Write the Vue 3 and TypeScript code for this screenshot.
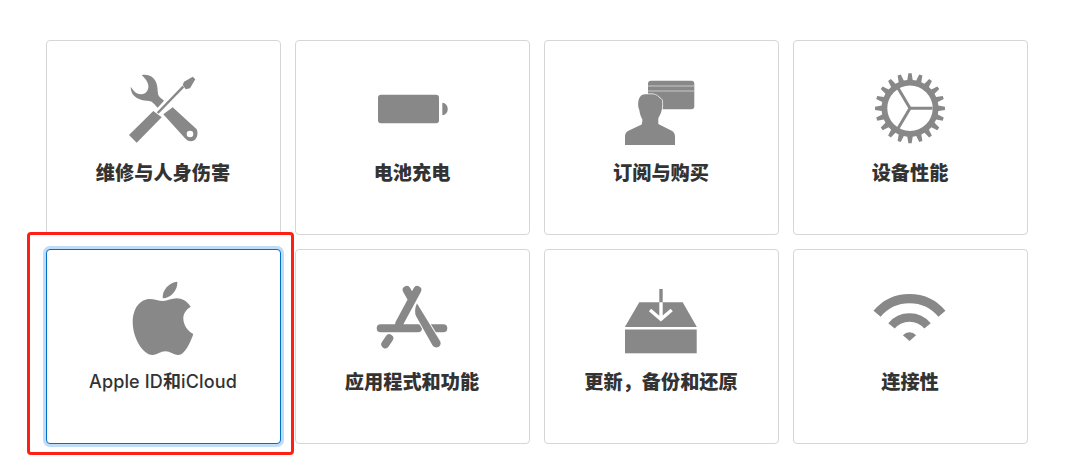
<template>
  <div class="topics">
    <div
      v-for="topic in topics"
      :key="topic.icon"
      class="topic-card"
      :class="{ focused: topic.icon === 'apple' }"
    >
      <svg class="topic-icon" width="81" height="80" viewBox="0 0 81 80">
        <template v-if="topic.icon === 'repair'">
          <path d="M18.7 5C22.5 4.3 26 5 28.7 6.7C32 9 33.7 12.5 34.3 16.7C34.7 20 34.7 22.5 35.3 25C36.5 27.5 38.8 28.8 41 30.7L34.7 37.7C32.5 35.5 31 33.5 28.7 31.7C25.5 30.5 22 30.8 18.7 30C15 29 12.3 27.3 10.3 25C8.5 22.5 7.7 19.8 7.7 16.7C9.3 19 11.2 21.7 13.7 23.3C16.5 24.5 19.5 24.5 22 23.3C24.5 21.5 25.8 18.3 25.3 15C24.6 11 21.5 7.7 18.7 5Z" />
          <path d="M49.7 37.3L40.3 44.3L62 68.3C64.5 71.5 68.5 72 71.3 70.3C74.5 68 75.3 63 73.7 59.3ZM67 60.7a3.3 3.3 0 1 1 0 6.6a3.3 3.3 0 1 1 0-6.6Z" fill-rule="evenodd" />
          <path class="shaft-gap" d="M34.7 43L60.3 16.7" />
          <path class="shaft" d="M34.7 43L60.3 16.7" />
          <path d="M6 65L13.7 72.7L38.7 47.3L30.3 41Z" />
          <path d="M59.7 15L61 11.7L69.7 6.7L72.3 9.3L67 18.3L62.7 19.3Z" />
        </template>

        <template v-else-if="topic.icon === 'battery'">
          <rect x="6" y="24.7" width="61" height="28.6" rx="3" />
          <path d="M70.3 32.7C73.5 33 75.7 35.5 75.7 39C75.7 42.5 73.5 45 70.3 45.3Z" />
        </template>

        <template v-else-if="topic.icon === 'billing'">
          <rect x="27" y="10.7" width="46.3" height="28.6" rx="3" />
          <path class="stripe" d="M27 16H73.3M27 21H73.3" />
          <path class="outlined" d="M4 75V66C4 63 6 61 9 60L20.7 54.5C21.3 52 21.5 50.5 21.3 49.3C19.5 46 18.7 43 18.3 40C17.3 38 16.8 34 17.3 31.7C18 27 20.5 24.3 24 24.3C26 24.3 28.5 24 32.3 24.3C35.5 24.6 37.5 26.8 39 28.3C41 29.5 41.3 30.5 41.3 31.7C41.6 34.5 41.3 37.5 40.7 40C40 43.5 38.5 46 37.3 48.3V54L50.7 60.7C53 62 54 64 54 66.7V75Z" />
        </template>

        <template v-else-if="topic.icon === 'gear'">
          <path :d="gearPath" fill-rule="evenodd" />
          <path class="spokes" d="M40 38.3H62.5M40 38.3L28 18M40 38.3L28 58.5" />
        </template>

        <template v-else-if="topic.icon === 'apple'">
          <path d="M39.7 19.3C39 11 46 3.5 54.3 2.7C55 11 48 19 39.7 19.3Z" />
          <path d="M40.3 22C44 22 49 19.3 53.7 19.3C59 19.3 64 22 67.7 27.7C62.5 31 60.3 35 60.3 39.3C60.3 46 64.5 52 70.3 55C68 62 62 76 55.3 76C50 76 47.5 72.3 42.5 72.3C37 72.3 34.5 76 29.5 76C20 76 9.7 59 9.7 43C9.7 28.5 18 20 26.5 20C31.5 20 35.5 22 40.3 22Z" />
        </template>

        <template v-else-if="topic.icon === 'apps'">
          <path class="thick" d="M45.3 11L27.3 44.3M34.7 11L39.5 19.5M8.7 49.3H46M56.3 49.3H71.3M17.3 59.3L13.3 65.3" />
          <path d="M45 24.5L68 62C69.5 65 68 67.5 65.5 68.3C63.5 68.8 61.5 68 60.3 66L44 37C42.5 34 43 28 45 24.5Z" class="outlined-thin" />
        </template>

        <template v-else-if="topic.icon === 'update'">
          <path d="M38.3 10H41.7V24H38.3Z" />
          <path d="M18.3 23.3H61.7L75.7 47.7V48H4V47.7Z" />
          <rect x="4" y="50.5" width="71.7" height="23.8" />
          <path class="cutout" d="M40 23.3V39M29 31L39.9 40.3L50.7 31" />
        </template>

        <template v-else>
          <path class="wifi" stroke-width="9.3" d="M7.1 34.8A42.3 42.3 0 0 1 71.9 34.8" />
          <path class="wifi" stroke-width="8.4" d="M21.5 46.9A23.5 23.5 0 0 1 57.5 46.9" />
          <path d="M39.5 62L32.9 56.3A8.7 8.7 0 0 1 46.1 56.3Z" />
        </template>
      </svg>
      <span class="topic-label">
        <template v-for="run in splitRuns(topic.label)" :key="run.text">
          <b v-if="run.cjk">{{ run.text }}</b>
          <template v-else>{{ run.text }}</template>
        </template>
      </span>
      <div v-if="topic.icon === 'apple'" class="highlight"></div>
    </div>
  </div>
</template>

<script setup lang="ts">
const topics = [
  { icon: 'repair', label: '维修与人身伤害' },
  { icon: 'battery', label: '电池充电' },
  { icon: 'billing', label: '订阅与购买' },
  { icon: 'gear', label: '设备性能' },
  { icon: 'apple', label: 'Apple ID和iCloud' },
  { icon: 'apps', label: '应用程式和功能' },
  { icon: 'update', label: '更新，备份和还原' },
  { icon: 'wifi', label: '连接性' },
];

// latin runs are medium weight, only the CJK characters are bold
const splitRuns = (label: string) =>
  (label.match(/[A-Za-z ]+|[^A-Za-z ]+/g) ?? []).map((text) => ({
    text,
    cjk: !/^[A-Za-z ]+$/.test(text),
  }));

// 20 tapered teeth round a ring, with the inner disc cut out
const buildGear = (cx: number, cy: number) => {
  const teeth = 20;
  const step = (Math.PI * 2) / teeth;
  const at = (r: number, a: number) =>
    `${(cx + r * Math.cos(a)).toFixed(2)} ${(cy + r * Math.sin(a)).toFixed(2)}`;
  let d = '';
  for (let i = 0; i < teeth; i++) {
    const a = i * step;
    d += `${i === 0 ? 'M' : 'L'}${at(28.5, a - step * 0.3)}`;
    d += `L${at(35, a - step * 0.15)}L${at(35, a + step * 0.15)}L${at(28.5, a + step * 0.3)}`;
  }
  d += `ZM${cx - 22.7} ${cy}a22.7 22.7 0 1 0 45.4 0a22.7 22.7 0 1 0 -45.4 0Z`;
  return d;
};

const gearPath = buildGear(40, 38.3);
</script>

<style scoped>
.topics {
  display: grid;
  grid-template-columns: repeat(4, 235px);
  grid-auto-rows: 195px;
  gap: 14px;
  padding: 40px 0 29px 46px;
}

.topic-card {
  position: relative;
  display: flex;
  flex-direction: column;
  align-items: center;
  box-sizing: border-box;
  padding-top: 30px;
  background: #fff;
  border: 1px solid #d6d6d6;
  border-radius: 4px;
}

.topic-card.focused {
  border-color: #0070c9;
  box-shadow: 0 0 0 3px #bfdcf8;
}

.topic-icon {
  display: block;
  margin-top: -1px;
  fill: #888;
}

.topic-label {
  margin: 1px 1px 0 0;
  font-family: "Inter", "Noto Sans CJK SC", sans-serif;
  font-size: 19.2px;
  font-weight: 700;
  line-height: 44px;
  color: #333;
  white-space: nowrap;
}

.focused .topic-label {
  font-size: 18px;
  font-weight: 500;
  letter-spacing: 0.13px;
}

.highlight {
  position: absolute;
  top: -18px;
  left: -20px;
  right: -14px;
  bottom: -12px;
  border: 3px solid #ff2015;
  border-radius: 4px;
  pointer-events: none;
}

.shaft-gap {
  fill: none;
  stroke: #fff;
  stroke-width: 5;
}

.shaft {
  fill: none;
  stroke: #888;
  stroke-width: 2.4;
}

.stripe {
  fill: none;
  stroke: #c8c8c8;
  stroke-width: 1;
}

.outlined {
  stroke: #fff;
  stroke-width: 1.5;
  paint-order: stroke;
}

.outlined-thin {
  stroke: #fff;
  stroke-width: 2;
  paint-order: stroke;
}

.spokes {
  fill: none;
  stroke: #888;
  stroke-width: 3;
}

.thick {
  fill: none;
  stroke: #888;
  stroke-width: 8;
  stroke-linecap: round;
}

.cutout {
  fill: none;
  stroke: #fff;
  stroke-width: 3.4;
}

.wifi {
  fill: none;
  stroke: #888;
}
</style>

<style>
body {
  background: #fff;
}
</style>
